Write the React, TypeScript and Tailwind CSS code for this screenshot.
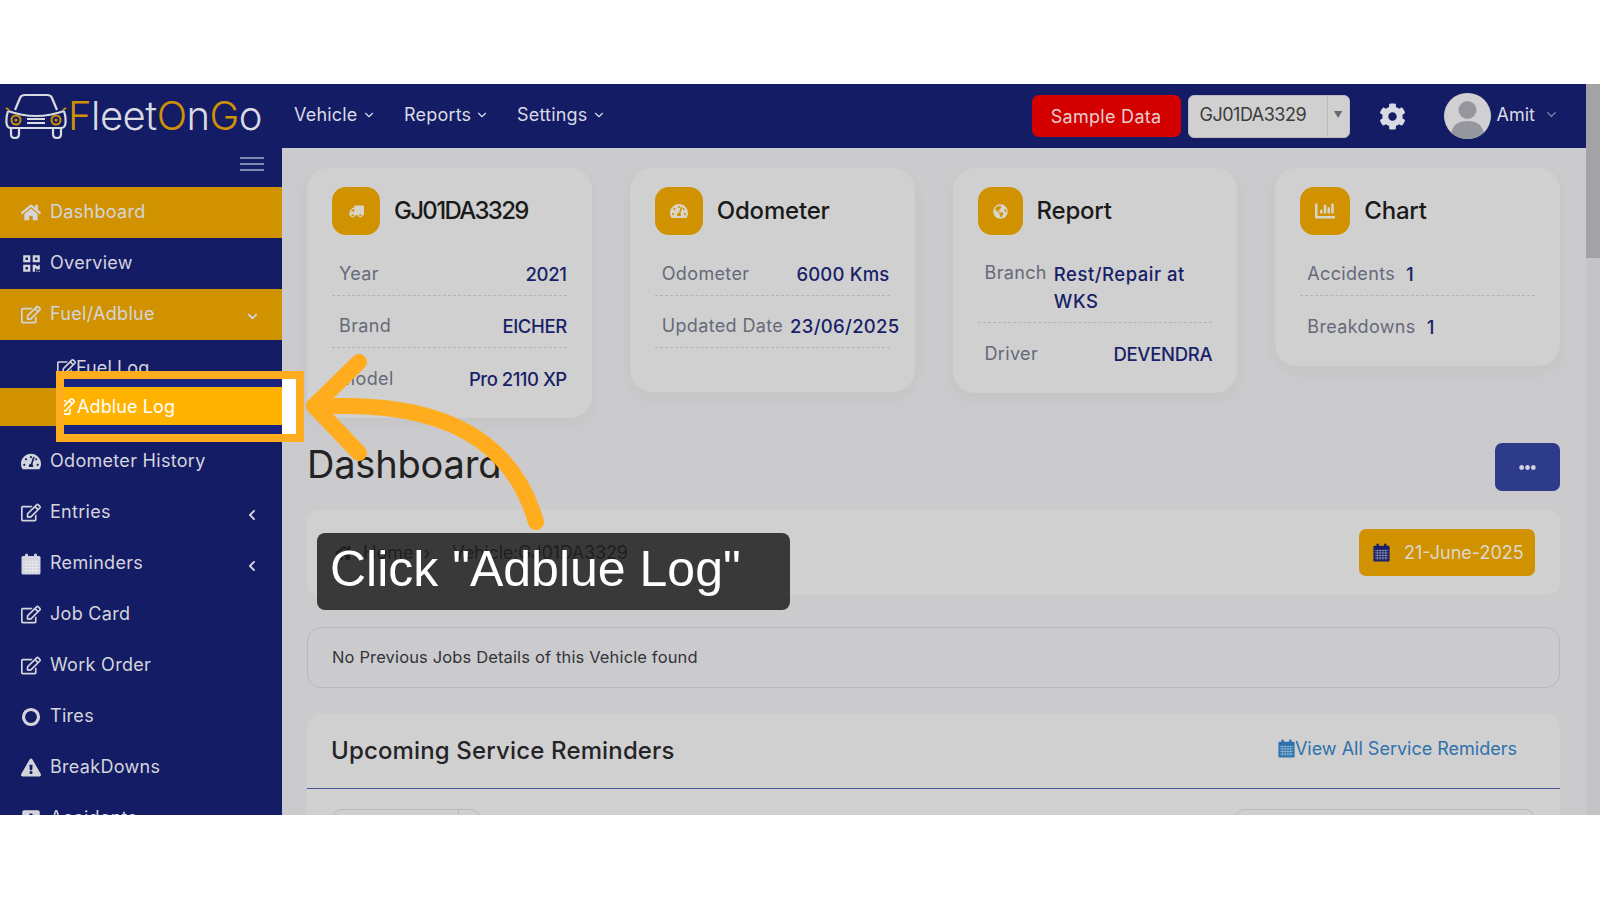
import React from "react";
import {
  FaHome, FaQrcode, FaRegEdit, FaTachometerAlt, FaExclamationTriangle, FaPlusSquare,
  FaTruck, FaGlobeAmericas, FaChartBar, FaCog, FaEllipsisH, FaChevronDown, FaChevronLeft,
} from "react-icons/fa";
import { ChevronDown } from "lucide-react";

type NavItem = { label: string; icon: React.ReactNode; active?: boolean; chevron?: "down" | "left" };

function GridCalendar({ className = "" }: { className?: string }) {
  return (
    <svg viewBox="0 0 20 22" className={className} fill="none">
      <rect x="0.5" y="3" width="19" height="18.5" rx="1.5" fill="currentColor" />
      <rect x="4" y="0.5" width="3" height="5.5" rx="1.5" fill="currentColor" />
      <rect x="13" y="0.5" width="3" height="5.5" rx="1.5" fill="currentColor" />
      <g stroke="#ffffff" strokeOpacity="0.45" strokeWidth="0.9">
        <path d="M2 8.5 H18 M2 11.5 H18 M2 14.5 H18 M2 17.5 H18" />
        <path d="M5 8 V20 M8.3 8 V20 M11.7 8 V20 M15 8 V20" />
      </g>
    </svg>
  );
}

const topNav: NavItem[] = [
  { label: "Dashboard", icon: <FaHome className="text-[21px]" />, active: true },
  { label: "Overview", icon: <FaQrcode className="text-[19px]" /> },
  { label: "Fuel/Adblue", icon: <FaRegEdit className="text-[21px]" />, active: true, chevron: "down" },
];
const bottomNav: NavItem[] = [
  { label: "Odometer History", icon: <FaTachometerAlt className="text-[21px]" /> },
  { label: "Entries", icon: <FaRegEdit className="text-[21px]" />, chevron: "left" },
  { label: "Reminders", icon: <GridCalendar className="h-[22px] w-[20px]" />, chevron: "left" },
  { label: "Job Card", icon: <FaRegEdit className="text-[21px]" /> },
  { label: "Work Order", icon: <FaRegEdit className="text-[21px]" /> },
  {
    label: "Tires",
    icon: (
      <svg viewBox="0 0 20 20" className="h-[20px] w-[20px]" fill="none">
        <circle cx="10" cy="10" r="7.5" stroke="currentColor" strokeWidth="3.2" />
      </svg>
    ),
  },
  { label: "BreakDowns", icon: <FaExclamationTriangle className="text-[21px]" /> },
  { label: "Accidents", icon: <FaPlusSquare className="text-[20px]" /> },
];

function SideRow({ item }: { item: NavItem }) {
  return (
    <div className={`flex h-[51px] shrink-0 items-center pl-[21px] pr-[24px] text-[#d4d5dc] ${item.active ? "bg-[#d09200]" : ""}`}>
      <span className="flex w-[20px] justify-center">{item.icon}</span>
      <span className="mb-[2px] ml-[9px] text-[18px] tracking-[0.3px]">{item.label}</span>
      {item.chevron === "down" && <FaChevronDown className="ml-auto mt-[4px] text-[11px]" />}
      {item.chevron === "left" && <FaChevronLeft className="ml-auto mt-[4px] text-[12px]" />}
    </div>
  );
}

function Row({ label, value, line = true, gap = false, track = "tracking-[0.1px]" }: { label: string; value: string; line?: boolean; gap?: boolean; track?: string }) {
  return (
    <div className={`flex h-[52px] items-center pl-[7px] pt-[12px] ${gap ? "gap-[11px]" : "justify-between"} ${line ? "border-b border-dashed border-[#b4b4b8]" : ""}`}>
      <span className="mb-[4px] whitespace-nowrap text-[18px] tracking-[0.35px] text-[#666a78]">{label}</span>
      <span className={`mb-[1px] whitespace-nowrap text-[18.5px] font-medium text-[#191f68] ${track}`}>{value}</span>
    </div>
  );
}

function CardHead({ icon, title, w = "w-[48px]", track = "tracking-[-0.2px]" }: { icon: React.ReactNode; title: string; w?: string; track?: string }) {
  return (
    <div className="flex items-center">
      <div className={`flex h-[48px] ${w} items-center justify-center rounded-[14px] bg-[#d09200] text-[#d8d4c8]`}>{icon}</div>
      <span className={`ml-[14px] text-[24px] font-medium text-[#1a1a1a] ${track}`}>{title}</span>
    </div>
  );
}

function Logo() {
  return (
    <svg viewBox="0 0 62 46" className="h-[46px] w-[62px] shrink-0" fill="none">
      <path d="M10 17 L15 5 Q16 2 20 2 H42 Q46 2 47 5 L52 17" stroke="#d9dbe3" strokeWidth="2.2" />
      <path d="M3 18 Q31 28 59 18" stroke="#d9dbe3" strokeWidth="2.2" />
      <path d="M3 18 Q1 24 1.5 30 Q2 35 6 35 H56 Q60 35 60.5 30 Q61 24 59 18" stroke="#d9dbe3" strokeWidth="2.2" />
      <path d="M6 35 V41 Q6 45 10 45 Q14 45 14 41 V35 M48 35 V41 Q48 45 52 45 Q56 45 56 41 V35" stroke="#d9dbe3" strokeWidth="2.2" />
      <path d="M22 26 H40 M22 30 H40" stroke="#d9dbe3" strokeWidth="2" />
      <circle cx="11" cy="27" r="4.5" stroke="#d09200" strokeWidth="2" />
      <circle cx="51" cy="27" r="4.5" stroke="#d09200" strokeWidth="2" />
      <circle cx="11" cy="27" r="1.6" fill="#d09200" />
      <circle cx="51" cy="27" r="1.6" fill="#d09200" />
      <path d="M1 15 L4 17 M61 15 L58 17" stroke="#d09200" strokeWidth="2" />
    </svg>
  );
}

export default function App() {
  return (
    <div className="relative flex h-[900px] w-[1600px] flex-col overflow-hidden bg-white font-['Inter',sans-serif]">
      <div className="h-[84px] shrink-0" />
      <div className="flex h-[731px] shrink-0 overflow-hidden">
        <div className="flex w-[1586px] shrink-0 flex-col">
          {/* header */}
          <div className="flex h-[64px] shrink-0 items-center bg-[#141c66]">
            <div className="ml-[5px] flex w-[289px] items-center">
              <Logo />
              <span className="ml-[1px] text-[40px] font-light leading-none tracking-[-0.5px] text-[#d9dbe3]">
                <span className="text-[#d09200]">F</span>leet<span className="text-[#d09200]">O</span>n<span className="text-[#d09200]">G</span>o
              </span>
            </div>
            <nav className="mb-[3px] flex items-center text-[18px] tracking-[0.2px] text-[#d9dbe3]">
              <span className="flex w-[110px] items-center gap-[4px]">Vehicle <ChevronDown size={14} /></span>
              <span className="flex w-[113px] items-center gap-[4px]">Reports <ChevronDown size={14} /></span>
              <span className="flex items-center gap-[4px]">Settings <ChevronDown size={14} /></span>
            </nav>
            <div className="ml-auto flex items-center">
              <div className="flex h-[42px] w-[149px] items-center justify-center rounded-[7px] bg-[#d40000] text-[18px] tracking-[0.3px] text-[#e4d0d0]">Sample Data</div>
              <div className="ml-[7px] flex h-[43px] w-[162px] items-center rounded-[6px] border border-[#bcbcc0] bg-[#d0d0d0] pl-[11px] text-[#3c3c3c]">
                <span className="mb-[3px] w-[127px] text-[18px] tracking-[-0.5px]">GJ01DA3329</span>
                <span className="flex h-full flex-1 items-start justify-center border-l border-[#bcbcc0] pt-[12px] text-[9px] text-[#6a6a6e]">▼</span>
              </div>
              <FaCog className="ml-[29px] text-[27px] text-[#d9dbe3]" />
              <div className="ml-[38px] flex h-[46px] w-[47px] items-center justify-center overflow-hidden rounded-full bg-[#d0d0d2]">
                <svg viewBox="0 0 47 46" className="h-full w-full">
                  <circle cx="23.5" cy="17" r="9" fill="#96969e" />
                  <path d="M7 41 Q9 28 23.5 28 Q38 28 40 41 Q32 46 23.5 46 Q15 46 7 41 Z" fill="#96969e" />
                </svg>
              </div>
              <span className="mb-[3px] ml-[6px] text-[18px] text-[#d9dbe3]">Amit</span>
              <ChevronDown size={15} className="mb-[3px] ml-[9px] mr-[27px] text-[#8a8eb0]" />
            </div>
          </div>
          <div className="flex min-h-0 flex-1">
            {/* sidebar */}
            <aside className="flex w-[282px] shrink-0 flex-col overflow-hidden bg-[#141c66]">
              <div className="flex h-[39px] shrink-0 items-center justify-end pb-[8px] pr-[18px]">
                <div className="flex w-[24px] flex-col gap-[4px]">
                  <div className="h-[2px] bg-[#8287ad]" />
                  <div className="h-[2px] bg-[#8287ad]" />
                  <div className="h-[2px] bg-[#8287ad]" />
                </div>
              </div>
              {topNav.map((item) => <SideRow key={item.label} item={item} />)}
              <div className="shrink-0 pb-[10px] pt-[8px]">
                <div className="flex h-[38px] items-center pl-[57px] text-[18px] text-[#d4d5dc]">
                  <FaRegEdit className="text-[19px]" /><span className="tracking-[0.1px]">Fuel Log</span>
                </div>
                <div className="mt-[2px] h-[38px] bg-[#d09200]" />
              </div>
              {bottomNav.map((item) => <SideRow key={item.label} item={item} />)}
            </aside>
            {/* main */}
            <main className="min-w-0 flex-1 overflow-hidden bg-[#cbcbcd] pl-[25px] pr-[26px] pt-[20px]">
              <div className="grid grid-cols-4 items-start gap-[38px]">
                <section className="rounded-[22px] bg-[#d0d0d0] px-[25px] pb-[18px] pt-[19px] shadow-[0_6px_18px_rgba(0,0,0,0.04)]">
                  <CardHead icon={<FaTruck className="-scale-x-100 text-[15px]" />} title="GJ01DA3329" track="tracking-[-1.7px]" />
                  <div className="mt-[9px]">
                    <Row label="Year" value="2021" track="tracking-[-0.3px]" />
                    <Row label="Brand" value="EICHER" track="tracking-[-0.4px]" />
                    <Row label="Model" value="Pro 2110 XP" line={false} track="tracking-[-0.5px]" />
                  </div>
                </section>
                <section className="rounded-[22px] bg-[#d0d0d0] px-[25px] pb-[44px] pt-[19px] shadow-[0_6px_18px_rgba(0,0,0,0.04)]">
                  <CardHead icon={<FaTachometerAlt className="text-[18px]" />} title="Odometer" />
                  <div className="mt-[9px]">
                    <Row label="Odometer" value="6000 Kms" track="tracking-[0.2px]" />
                    <div className="flex h-[52px] items-center whitespace-nowrap border-b border-dashed border-[#b4b4b8] pl-[7px] pt-[12px]">
                      <span className="mb-[4px] text-[18px] tracking-[0.35px] text-[#666a78]">Updated Date</span>
                      <span className="mb-[1px] ml-[7px] text-[18.5px] font-medium tracking-[0.3px] text-[#191f68]">23/06/2025</span>
                    </div>
                  </div>
                </section>
                <section className="rounded-[22px] bg-[#d0d0d0] px-[25px] pb-[18px] pt-[19px] shadow-[0_6px_18px_rgba(0,0,0,0.04)]">
                  <CardHead icon={<FaGlobeAmericas className="text-[15px]" />} title="Report" w="w-[45px]" />
                  <div className="mt-[9px]">
                    <div className="flex h-[79px] items-start gap-[7px] border-b border-dashed border-[#b4b4b8] pl-[7px] pt-[17px]">
                      <span className="-mt-[2px] text-[18px] tracking-[0.35px] text-[#666a78]">Branch</span>
                      <span className="text-[18.5px] font-medium leading-[27px] tracking-[0.5px] text-[#191f68]">Rest/Repair at WKS</span>
                    </div>
                    <Row label="Driver" value="DEVENDRA" line={false} track="tracking-[-0.3px]" />
                  </div>
                </section>
                <section className="rounded-[22px] bg-[#d0d0d0] px-[25px] pb-[18px] pt-[19px] shadow-[0_6px_18px_rgba(0,0,0,0.04)]">
                  <CardHead icon={<FaChartBar className="text-[20px]" />} title="Chart" w="w-[50px]" />
                  <div className="mt-[9px]">
                    <Row label="Accidents" value="1" gap />
                    <Row label="Breakdowns" value="1" gap line={false} />
                  </div>
                </section>
              </div>

              <div className="mt-[25px] flex h-[48px] items-center justify-between">
                <h1 className="mb-[6px] text-[38px] font-normal tracking-[-0.2px] text-[#222222]">Dashboard</h1>
                <div className="flex h-[48px] w-[65px] items-center justify-center rounded-[7px] bg-[#2e3a8a] text-[#d0d2de]"><FaEllipsisH className="text-[17px]" /></div>
              </div>

              <div className="mt-[19px] flex h-[85px] items-center justify-between rounded-[12px] bg-[#d0d0d0] pl-[28px] pr-[25px]">
                <div className="flex items-center text-[18px] text-black">
                  <FaHome className="text-[18px]" />
                  <span className="ml-[10px]">Home</span>
                  <span className="ml-[10px]">›</span>
                  <span className="ml-[22px] tracking-[-0.2px]">Vehicle:GJ01DA3329</span>
                </div>
                <div className="flex h-[47px] w-[176px] items-center rounded-[7px] bg-[#d09200] pl-[14px] text-[18px] text-[#dcd8cc]">
                  <GridCalendar className="h-[19px] w-[17px] text-[#191f68]" />
                  <span className="ml-[14px]">21-June-2025</span>
                </div>
              </div>

              <div className="mt-[32px] flex h-[61px] items-center rounded-[14px] border border-[#b8b8bc] px-[24px] text-[16.5px] tracking-[0.14px] text-[#33343a]">
                No Previous Jobs Details of this Vehicle found
              </div>

              <section className="mt-[25px] rounded-t-[16px] bg-[#d0d0d0]">
                <div className="flex h-[76px] items-center justify-between border-b border-[#4a5296] pl-[24px] pr-[43px]">
                  <h2 className="text-[24px] font-medium tracking-[0.15px] text-[#242428]">Upcoming Service Reminders</h2>
                  <span className="mb-[4px] flex items-center text-[18px] text-[#2d72ad]"><GridCalendar className="h-[19px] w-[17px]" />View All Service Remiders</span>
                </div>
                <div className="flex justify-between px-[25px] pt-[20px]">
                  <div className="flex h-[30px] w-[149px] rounded-t-[10px] border border-[#b8b8bc]">
                    <div className="w-[126px] border-r border-[#b8b8bc]" />
                  </div>
                  <div className="h-[30px] w-[300px] rounded-t-[10px] border border-[#b8b8bc]" />
                </div>
              </section>
            </main>
          </div>
        </div>
        {/* scrollbar */}
        <div className="flex-1 bg-[#c4c4c6]">
          <div className="h-[174px] bg-[#a3a3a5]" />
        </div>
      </div>
      <div className="flex-1" />

      {/* spotlight */}
      <div className="absolute left-[56px] top-[371px] h-[71px] w-[248px] border-[8px] border-[#ffad1f] bg-[#1a237e]">
        <div className="flex h-full w-full">
          <div className="flex w-[218px] flex-col pt-[8px]">
            <div className="flex h-[38px] items-center overflow-hidden bg-[#ffb300] text-[18px] tracking-[0.1px] text-white">
              <FaRegEdit className="-ml-[8px] shrink-0 text-[19px]" /><span className="ml-[2px]">Adblue Log</span>
            </div>
          </div>
          <div className="flex-1 bg-white" />
        </div>
      </div>

      {/* arrow */}
      <svg className="pointer-events-none absolute inset-0 h-[900px] w-[1600px]" viewBox="0 0 1600 900" fill="none">
        <path d="M536 522 C518 460 470 406 345 406 L314 406" stroke="#ffad1f" strokeWidth="16" strokeLinecap="round" />
        <path d="M359 362 L314 406 L359 453" stroke="#ffad1f" strokeWidth="16" strokeLinecap="round" strokeLinejoin="round" />
      </svg>

      {/* tooltip */}
      <div className="absolute left-[317px] top-[533px] flex h-[77px] w-[473px] items-center rounded-[8px] bg-[#232323]/[0.88] pb-[6px] pl-[13px] font-['Liberation_Sans',sans-serif] text-[50px] leading-none text-white">
        Click "Adblue Log"
      </div>
    </div>
  );
}
